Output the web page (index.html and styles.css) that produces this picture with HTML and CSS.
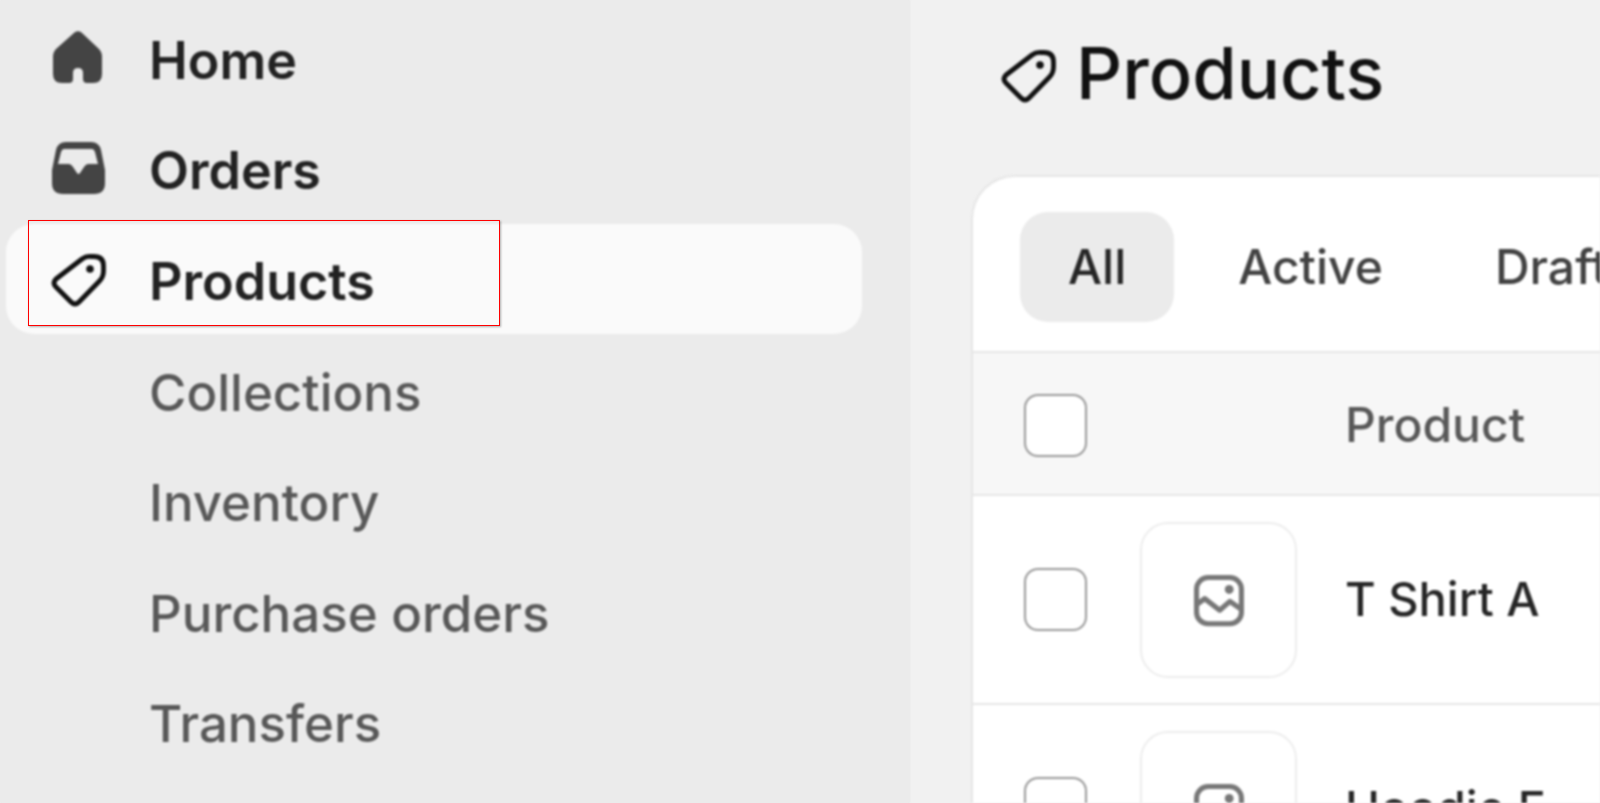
FILE: index.html
```html
<!DOCTYPE html>
<html>
<head>
    <meta name="viewport" content="width=device-width, initial-scale=1">
    <link rel="stylesheet" href="styles.css">
</head>
<body>

<div class="screen">
    <div class="sidebar">
        <a class="nav-item">
            <svg class="nav-icon home-icon" viewBox="0 0 68 68"><path fill="#444" d="M30.500 8.500Q34 6 37.500 8.500L55 25Q58 28 58 33V50Q58 59 49 59H43Q39 59 39 55V49Q39 44 34 44Q29 44 29 49V55Q29 59 25 59H18Q9 59 9 50V33Q9 28 12 25Z"/></svg>
            <span>Home</span>
        </a>
        <a class="nav-item">
            <svg class="nav-icon" viewBox="0 0 68 68"><path fill="#444" fill-rule="evenodd" d="M22 8H47Q55 8 57 16L61 36V49Q61 60 50 60H19Q8 60 8 49V36L12 16Q14 8 22 8ZM20 15H48Q50 15 51 18L54 30H44Q42 30 40 33L36 39Q34.500 41 33 39L29 33Q27 30 25 30H14L17 18Q18 15 20 15Z"/></svg>
            <span>Orders</span>
        </a>
        <a class="nav-item active">
            <svg class="nav-icon tag-icon" viewBox="0 0 68 68"><use href="#tag"/></svg>
            <span>Products</span>
        </a>
        <a class="nav-item sub">Collections</a>
        <a class="nav-item sub">Inventory</a>
        <a class="nav-item sub">Purchase orders</a>
        <a class="nav-item sub">Transfers</a>
    </div>

    <div class="main">
        <div class="page-title">
            <svg class="title-icon" viewBox="0 0 68 68"><use href="#tag"/></svg>
            <h1>Products</h1>
        </div>
        <div class="card">
            <div class="tabs">
                <span class="tab selected">All</span>
                <span class="tab">Active</span>
                <span class="tab">Draft</span>
            </div>
            <div class="row head">
                <span class="checkbox"></span>
                <span class="name">Product</span>
            </div>
            <div class="row item">
                <span class="checkbox"></span>
                <span class="thumb"><svg class="thumb-icon" viewBox="0 0 20 20"><use href="#image"/></svg></span>
                <span class="name">T Shirt A</span>
            </div>
            <div class="row item">
                <span class="checkbox"></span>
                <span class="thumb"><svg class="thumb-icon" viewBox="0 0 20 20"><use href="#image"/></svg></span>
                <span class="name">Hoodie F</span>
            </div>
        </div>
    </div>
</div>

<div class="highlight"></div>

<svg class="defs" width="0" height="0">
    <defs>
        <g id="tag">
            <path fill="none" stroke="#111" stroke-width="4.800" stroke-linejoin="round" d="M38 13Q42 10 47 10.500H50Q59.500 10.500 59.500 20V25Q59.500 31 55.500 35L35 56Q31 60 27 56L12 41Q8 37 12 33Z"/>
            <circle cx="46" cy="23" r="3.800" fill="#111"/>
        </g>
        <g id="image" fill="none" stroke="currentColor" stroke-width="1.500">
            <rect x="3.400" y="3.400" width="13.200" height="13.600" rx="3.400"/>
            <path d="M3.400 11.400L5.800 9.600L10.200 13L13.200 10.400L16.600 12.800" stroke-linejoin="round"/>
            <circle cx="13" cy="6.900" r="1.300" fill="currentColor" stroke="none"/>
        </g>
    </defs>
</svg>

</body>
</html>
```

FILE: styles.css
```css
* {box-sizing: border-box}

body {
    margin: 0;
    height: 803px;
    overflow: hidden;
    font-family: "Inter", "Liberation Sans", sans-serif;
    background: linear-gradient(to right, #ebebeb 910px, #f1f1f1 910px);
}

/* The whole shot is a soft upscale, only the red box on top is crisp */
.screen {
    display: flex;
    height: 803px;
    overflow: hidden;
    filter: blur(0.8px);
}

/* Left navigation */
.sidebar {
    width: 910px;
    flex-shrink: 0;
    padding: 5px 48px 0 6px;
    background-color: #ebebeb;
}

.nav-item {
    display: flex;
    align-items: center;
    height: 110.600px;
    padding-left: 38px;
    font-size: 52px;
    font-weight: 600;
    color: #222;
}

.nav-item.active {
    height: 110px;
    margin-top: -2px;
    margin-bottom: 2.600px;
    padding-top: 4px;
    background-color: #fafafa;
    border-radius: 28px;
}

.nav-item.sub {
    padding-left: 143px;
    font-size: 51px;
    font-weight: 500;
    color: #585858;
}

.nav-icon {
    width: 68px;
    height: 68px;
    margin-right: 37px;
    margin-top: -5px;
}

.home-icon {
    margin-top: -5px;
}

.tag-icon {
    margin-top: -2px;
}

/* Red box drawn on top of the active item */
.highlight {
    position: absolute;
    left: 28px;
    top: 220px;
    width: 472px;
    height: 106px;
    border: 1px solid #f00;
    box-shadow: 1px 1px 2px rgba(0, 0, 0, 0.3);
}

/* Main column */
.main {
    flex: 1;
    padding-left: 61px;
    min-width: 0;
}

.page-title {
    display: flex;
    align-items: center;
    height: 143px;
    padding-left: 23px;
}

.title-icon {
    width: 68px;
    height: 68px;
    margin-top: 8px;
    margin-right: 14px;
}

h1 {
    margin: 2px 0 0;
    font-size: 72px;
    font-weight: 500;
    color: #111;
}

.card {
    margin-top: 32px;
    margin-right: -60px;
    height: 700px;
    background-color: #fff;
    border: 2px solid #e6e6e6;
    border-right: none;
    border-radius: 44px 0 0 0;
}

.tabs {
    display: flex;
    align-items: center;
    gap: 16px;
    height: 176px;
    padding-top: 5px;
    padding-left: 47px;
    border-bottom: 2px solid #e6e6e6;
}

.tab {
    display: flex;
    align-items: center;
    height: 110px;
    padding: 0 48px;
    border-radius: 28px;
    font-size: 48px;
    font-weight: 500;
    color: #424242;
}

.tab.selected {
    background-color: #ebebeb;
    color: #262626;
}

.row {
    display: flex;
    align-items: center;
    padding-left: 51px;
    border-bottom: 2px solid #e6e6e6;
}

.row.head {
    height: 143px;
    padding-top: 3px;
    background-color: #f7f7f7;
}

.row.item {
    height: 209px;
}

.checkbox {
    width: 63px;
    height: 63px;
    flex-shrink: 0;
    background-color: #fff;
    border: 2px solid #999;
    border-radius: 14px;
}

.thumb {
    display: flex;
    align-items: center;
    justify-content: center;
    width: 157px;
    height: 156px;
    margin-left: 53px;
    border: 2px solid #ededed;
    border-radius: 28px;
    color: #777;
}

.thumb-icon {
    width: 68px;
    height: 68px;
}

.name {
    margin-left: 48px;
    margin-bottom: 3px;
    font-size: 47px;
    font-weight: 450;
    color: #262626;
}

.row.head .name {
    margin-left: 258px;
    margin-bottom: 1px;
    font-size: 48px;
    font-weight: 500;
    color: #585858;
}

.defs {
    position: absolute;
}
```
